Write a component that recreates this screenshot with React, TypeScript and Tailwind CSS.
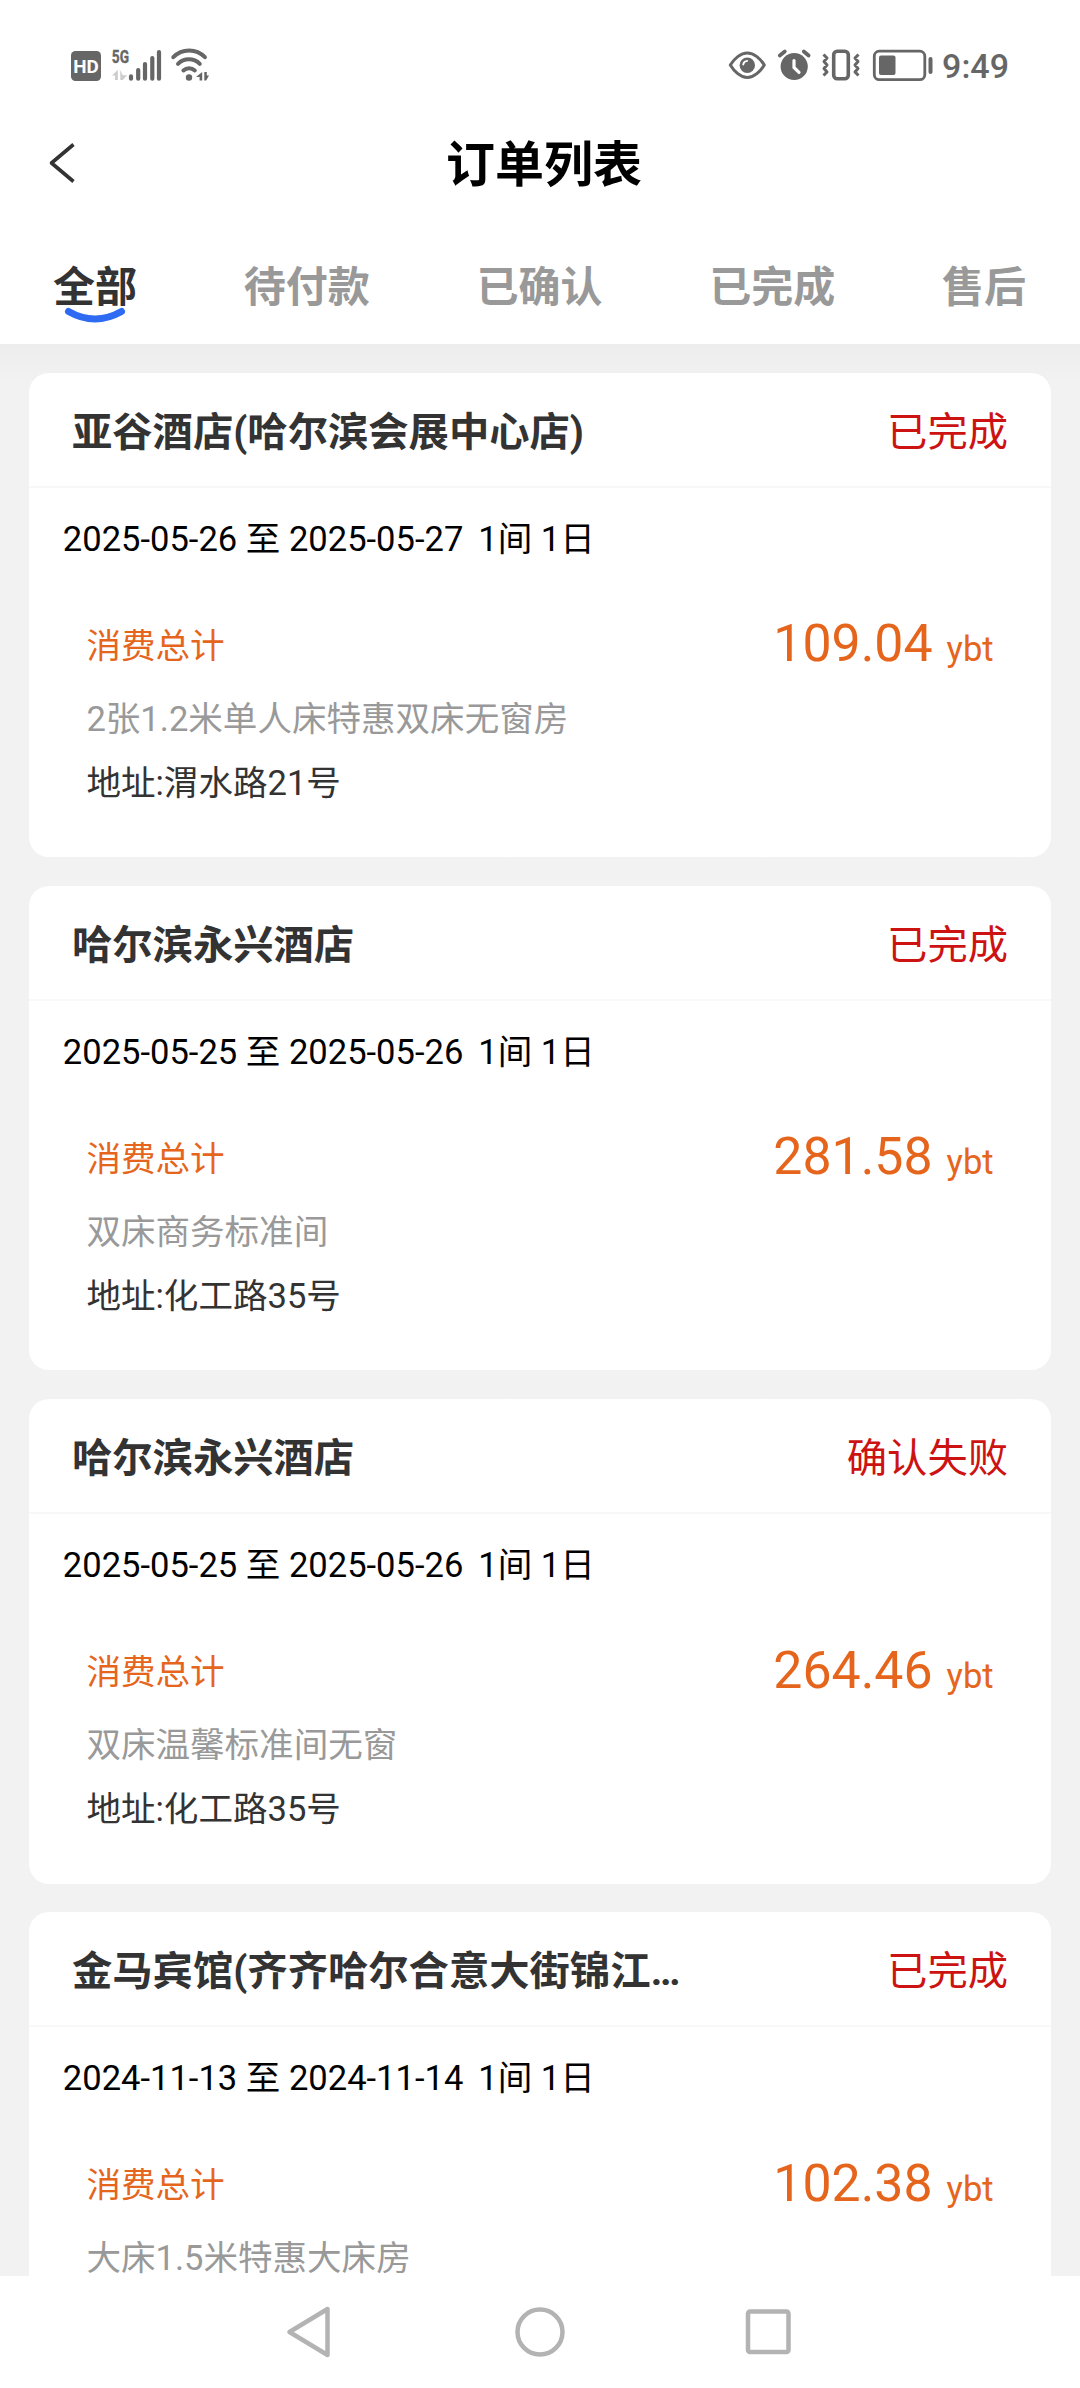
import { useState } from 'react';
import clsx from 'clsx';

type Order = {
  id: number;
  hotel: string;
  status: string;
  checkIn: string;
  checkOut: string;
  price: string;
  room: string;
  address?: string;
};

const tabs = ['全部', '待付款', '已确认', '已完成', '售后'];

const orders: Order[] = [
  {
    id: 1,
    hotel: '亚谷酒店(哈尔滨会展中心店)',
    status: '已完成',
    checkIn: '2025-05-26',
    checkOut: '2025-05-27',
    price: '109.04',
    room: '2张1.2米单人床特惠双床无窗房',
    address: '渭水路21号',
  },
  {
    id: 2,
    hotel: '哈尔滨永兴酒店',
    status: '已完成',
    checkIn: '2025-05-25',
    checkOut: '2025-05-26',
    price: '281.58',
    room: '双床商务标准间',
    address: '化工路35号',
  },
  {
    id: 3,
    hotel: '哈尔滨永兴酒店',
    status: '确认失败',
    checkIn: '2025-05-25',
    checkOut: '2025-05-26',
    price: '264.46',
    room: '双床温馨标准间无窗',
    address: '化工路35号',
  },
  {
    id: 4,
    hotel: '金马宾馆(齐齐哈尔合意大街锦江…',
    status: '已完成',
    checkIn: '2024-11-13',
    checkOut: '2024-11-14',
    price: '102.38',
    room: '大床1.5米特惠大床房',
  },
];

function StatusBar() {
  return (
    <div className="flex h-[131px] shrink-0 justify-between pt-[46px] pr-[71px] pl-[70px] text-[#666]">
      <svg width="142" height="40" viewBox="70 46 142 40" fill="none" fontFamily="Roboto, sans-serif" fontWeight="700">
        {/* HD */}
        <rect x="71" y="51" width="30" height="30" rx="4.5" fill="currentColor" />
        <text x="73.2" y="72.8" fontSize="18.5" fill="#fff" textLength="25.6" lengthAdjust="spacingAndGlyphs">
          HD
        </text>

        {/* Signal */}
        <text x="111.8" y="63.4" fontSize="19" fill="currentColor" stroke="currentColor" strokeWidth="0.4" textLength="17.2" lengthAdjust="spacingAndGlyphs">
          5G
        </text>
        <path d="M117.8 70v10h-2.8v-4.5H112zM120.3 70v10h2.4l4.5-4.8h-4.5z" fill="#ccc" />
        <g stroke="currentColor" strokeWidth="4.2" strokeLinecap="round">
          <path d="M131 76.4v2.3M138.2 70v8.7M145 64v14.7M152.3 58v20.7M159 52v26.7" />
        </g>

        {/* Wi-Fi */}
        <g stroke="currentColor" strokeWidth="4" strokeLinecap="round">
          <path d="M173.3 57.2a22 22 0 0 1 31.6 0M178 63.8a15.4 15.4 0 0 1 21.8 0M183.4 70.4a8.6 8.6 0 0 1 11.4 0" />
        </g>
        <circle cx="189" cy="77.5" r="3.2" fill="currentColor" />
        <path d="M202.2 72v8.5h-2.6v-3.5H196zM204.3 72v8.5h1.9l2.8-5h-2.2V72z" fill="currentColor" />
      </svg>

      <div className="flex">
        <svg width="210" height="40" viewBox="728 46 210 40" fill="none" stroke="currentColor">
          {/* Eye */}
          <path d="M731.3 65c3.8-6.4 10.4-12 17-12s13.2 5.6 17 12c-3.8 6.4-10.4 12.5-17 12.5s-13.2-6.1-17-12.5z" strokeWidth="3" strokeLinejoin="round" />
          <circle cx="748.3" cy="65.2" r="7.7" fill="currentColor" stroke="none" />
          <path d="M744.2 64.5a4.5 4.5 0 0 1 4-3.6" stroke="#fff" strokeWidth="1.8" strokeLinecap="round" />

          {/* Alarm */}
          <circle cx="795.2" cy="66.5" r="13.6" fill="currentColor" stroke="none" />
          <path d="M780.8 55.5l5-4M804.8 51.5l4.8 4" strokeWidth="3.8" strokeLinecap="round" />
          <path d="M795 60.5v7l5 4.8" stroke="#fff" strokeWidth="3.2" strokeLinecap="round" />

          {/* Vibrate */}
          <rect x="834.7" y="51.2" width="14.6" height="27.6" rx="3.5" strokeWidth="3.6" />
          <path d="M824.5 54.5l3.5 3.5-3 3.5 3 3.5-3 3.5 3 3.5-3.5 3.5M859.5 54.5l-3.5 3.5 3 3.5-3 3.5 3 3.5-3 3.5 3.5 3.5" strokeWidth="3" strokeLinejoin="round" />

          {/* Battery */}
          <rect x="875.3" y="51.2" width="50.5" height="28.5" rx="5" strokeWidth="2.8" />
          <rect x="880" y="55.5" width="16.5" height="19.5" rx="2" fill="currentColor" stroke="none" />
          <path d="M931.5 59v13" strokeWidth="4" strokeLinecap="round" />
        </svg>
        <span className="ml-[5px] text-[34px] leading-10 font-medium">9:49</span>
      </div>
    </div>
  );
}

function OrderCard({ order }: { order: Order }) {
  return (
    <div className="h-[484.4px] shrink-0 rounded-[20px] bg-white text-[34.56px]">
      <div className="flex h-[115px] items-center justify-between border-b-2 border-[#f8f8f8] px-[43.2px] pt-[7px] text-[40.32px]">
        <h2 className="font-bold text-[#333]">{order.hotel}</h2>
        <span className="text-[#cd1212]">{order.status}</span>
      </div>

      <div className="flex h-[100px] items-center pt-1 pl-[34px] text-black">
        <span>
          {order.checkIn} 至 {order.checkOut}
        </span>
        <span className="ml-[15px]">1间 1日</span>
      </div>

      <div className="px-[57.6px]">
        <div className="mt-[13px] flex h-[90px] justify-between leading-[90px] text-[#e5651d]">
          <span>消费总计</span>
          <span className="-mt-[1.5px]">
            <span className="mr-[14px] text-[51.84px]">{order.price}</span>
            ybt
          </span>
        </div>
        <div className="mt-[3px] h-[50px] leading-[50px] text-[#999]">{order.room}</div>
        {order.address && (
          <div className="mt-[13px] h-[52px] leading-[52px] text-[#333]">地址:{order.address}</div>
        )}
      </div>
    </div>
  );
}

export default function App() {
  const [activeTab, setActiveTab] = useState(tabs[0]);

  return (
    <div className="flex h-[2388px] w-[1080px] flex-col overflow-hidden bg-white font-[Roboto,'Noto_Sans_CJK_SC',sans-serif]">
      <StatusBar />

      {/* Header */}
      <header className="grid h-[64px] shrink-0 grid-cols-[1fr_auto_1fr] items-center">
        <button className="pl-[46px]">
          <svg width="30" height="42" viewBox="0 0 30 42" fill="none" stroke="#333" strokeWidth="3.6">
            <path d="M27.5 2.5L5.5 21l22 18.5" strokeLinejoin="round" />
          </svg>
        </button>
        <h1 className="pt-1.5 pl-2 text-[48.96px] leading-none font-bold text-black">订单列表</h1>
      </header>

      {/* Tabs */}
      <nav className="flex h-[149px] shrink-0 items-start justify-between pt-[63px] pr-[54px] pl-[53px]">
        {tabs.map((tab) => (
          <button
            key={tab}
            onClick={() => setActiveTab(tab)}
            className={clsx(
              'flex flex-col items-center text-[42px] leading-[60px] font-bold',
              tab === activeTab ? 'text-[#333]' : 'text-[#999]',
            )}
          >
            {tab}
            {tab === activeTab && (
              <svg className="-mt-[11px]" width="62" height="16" viewBox="0 0 62 16" fill="none">
                <path d="M4.5 4.5Q31 19.5 57.5 4.5" stroke="#2f6bf2" strokeWidth="7" strokeLinecap="round" />
              </svg>
            )}
          </button>
        ))}
      </nav>

      {/* Orders */}
      <main className="flex min-h-0 flex-1 flex-col gap-[28.8px] overflow-hidden bg-[#f2f2f2] bg-linear-to-b from-[#ededed] to-[#f2f2f2] to-[40px] px-[28.8px] pt-[28.8px]">
        {orders.map((order) => (
          <OrderCard key={order.id} order={order} />
        ))}
      </main>

      {/* System navigation */}
      <footer className="flex h-[112px] shrink-0 items-center justify-center gap-[179px] bg-white">
        <svg width="50" height="54" viewBox="0 0 50 54" fill="none" stroke="#b3b3b3" strokeWidth="4.5" strokeLinejoin="round">
          <path d="M41.5 4v46L3.5 27z" />
        </svg>
        <svg width="50" height="50" viewBox="0 0 50 50" fill="none" stroke="#b3b3b3" strokeWidth="4.5">
          <circle cx="25" cy="25" r="22.5" />
        </svg>
        <svg width="50" height="50" viewBox="0 0 50 50" fill="none" stroke="#b3b3b3" strokeWidth="4.5">
          <rect x="4" y="4.5" width="40.5" height="40.5" rx="2" />
        </svg>
      </footer>
    </div>
  );
}
